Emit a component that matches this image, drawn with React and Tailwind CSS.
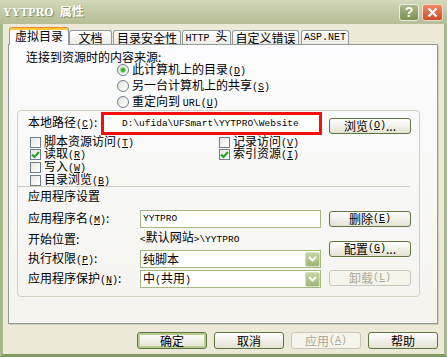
const mono = "font-['Liberation_Mono','Noto_Sans_CJK_SC',monospace]";

function K({ c }) {
  return (
    <span className={`${mono} text-[10px]`}>
      (<span className="underline">{c}</span>)
    </span>
  );
}

function Btn({ children, className = '', def = false, disabled = false }) {
  return (
    <div
      className={`flex items-center justify-center rounded-[3px] border ${
        disabled
          ? 'border-[#c9c7ba] bg-[#f5f4ea] text-[#aca899]'
          : 'border-[#5f7440] bg-gradient-to-b from-white to-[#e4e2d2] text-black'
      } ${def ? 'shadow-[inset_0_0_0_2px_#b5cc8c]' : ''} ${className}`}
    >
      {children}
    </div>
  );
}

function Check({ checked, children }) {
  return (
    <div className="h-full flex items-center gap-[3px] leading-[12px]">
      <div className="shrink-0 w-[11px] h-[11px] border border-[#6f7e8c] bg-gradient-to-br from-[#e6e6e0] to-white flex items-center justify-center">
        {checked && (
          <svg width="9" height="9" viewBox="0 0 9 9">
            <path d="M1 4.5 L3.5 7 L8 2" fill="none" stroke="#21a121" strokeWidth="2" />
          </svg>
        )}
      </div>
      <span className="leading-[12px]">{children}</span>
    </div>
  );
}

function Radio({ checked, children }) {
  return (
    <div className="h-[16px] flex items-center gap-[3px]">
      <div className="w-[12px] h-[12px] rounded-full border border-[#6f7e8c] bg-gradient-to-br from-[#e3e3dc] to-white flex items-center justify-center">
        {checked && <div className="w-[4px] h-[4px] rounded-full bg-[#3fae2e] shadow-[0_0_0_1px_#9ad58f]" />}
      </div>
      <span>{children}</span>
    </div>
  );
}

function Select({ children }) {
  return (
    <div className="w-[181px] h-[18px] border border-[#a5b97f] bg-white flex items-center justify-between pl-[2px]">
      <span>{children}</span>
      <div className="w-[15px] h-[15px] rounded-[2px] border border-[#d5e0c0] bg-gradient-to-b from-[#c4d5a4] to-[#9eb677] flex items-center justify-center">
        <svg width="9" height="6" viewBox="0 0 9 6">
          <path d="M1 1 L4.5 4.5 L8 1" fill="none" stroke="white" strokeWidth="2" />
        </svg>
      </div>
    </div>
  );
}

function Tab({ label, active, className = '' }) {
  if (active) {
    return (
      <div className={`relative z-10 -mb-px h-[18px] flex items-center justify-center pb-[1px] border border-b-0 border-[#919b9c] border-t-[#e68b2c] rounded-t-[3px] bg-[#fcfcfe] shadow-[inset_0_2px_0_#ffc73c] ${className}`}>
        {label}
      </div>
    );
  }
  return (
    <div className={`h-[14px] flex items-center justify-center leading-[12px] border border-b-0 border-[#919b9c] rounded-t-[3px] bg-gradient-to-b from-white to-[#ecebe5] ${className}`}>
      {label}
    </div>
  );
}

export default function App() {
  return (
    <div className="w-[447px] h-[357px] flex flex-col bg-[#ece9d8] font-['Noto_Sans_CJK_SC',sans-serif] text-[12px] leading-[14px] text-black overflow-hidden">
      {/* title bar */}
      <div className="h-[24px] flex items-center justify-between pl-[3px] pr-[4px] bg-gradient-to-b from-[#d3d9bb] via-[#c2c9a5] to-[#b6be97]">
        <span className="font-['Liberation_Serif','Noto_Sans_CJK_SC',serif] font-bold text-[12px] text-white [text-shadow:1px_1px_0_#8c9472]">
          YYTPRO&nbsp; 属性
        </span>
        <div className="flex items-center gap-[3px]">
          <div className="w-[20px] h-[17px] rounded-[3px] border border-[#e8eedc] bg-gradient-to-b from-[#a9ba88] to-[#7b9256] flex items-center justify-center text-white font-bold text-[14px] font-['Liberation_Sans',sans-serif]">
            ?
          </div>
          <div className="w-[21px] h-[17px] rounded-[3px] border border-[#f4d8cc] bg-gradient-to-b from-[#e88b66] to-[#cd4a22] flex items-center justify-center">
            <svg width="11" height="11" viewBox="0 0 11 11">
              <path d="M1.5 1.5 L9.5 9.5 M9.5 1.5 L1.5 9.5" stroke="white" strokeWidth="2.2" />
            </svg>
          </div>
        </div>
      </div>

      <div className="flex-1 flex flex-col border-x-[3px] border-b-[3px] border-x-[#a5b98a] border-b-[#7f9b5f] px-[5px]">
        {/* tabs */}
        <div className="h-[20px] flex items-end">
          <Tab active label="虚拟目录" className="w-[60px] ml-[1px]" />
          <Tab label="文档" className="w-[43px]" />
          <Tab label="目录安全性" className="w-[68px] ml-[1px]" />
          <Tab label={<span><span className={`${mono} text-[10px]`}>HTTP </span>头</span>} className="w-[49px] ml-[1px]" />
          <Tab label="自定义错误" className="w-[67px] ml-[1px]" />
          <Tab label={<span className={`${mono} text-[10px]`}>ASP.NET</span>} className="w-[48px] ml-[2px]" />
        </div>

        {/* panel */}
        <div className="w-[430px] h-[280px] border border-[#919b9c] bg-gradient-to-b from-[#fcfcfe] to-[#f4f3ee] shadow-[1px_1px_0_#d0cdb8]">
          <div className="h-[17px] pt-[5px] pl-[17px]">连接到资源时的内容来源:</div>
          <div className="pl-[108px] flex flex-col">
            <Radio checked>此计算机上的目录<K c="D" /></Radio>
            <Radio>另一台计算机上的共享<K c="S" /></Radio>
            <Radio>重定向到 <span className={`${mono} text-[10px]`}>URL</span><K c="U" /></Radio>
          </div>

          <div className="ml-[8px] w-[403px] h-[187px] border border-[#d0d0bf] rounded-[4px] flex flex-col">
            <div className="mt-[1px] h-[23px] flex items-center">
              <span className="w-[83px] pl-[10px]">本地路径<K c="C" />:</span>
              <div className={`w-[221px] h-[23px] border-[3px] border-[#f2100e] bg-white flex items-center pl-[18px] ${mono} text-[9.5px]`}>
                D:\ufida\UFSmart\YYTPRO\Website
              </div>
              <Btn className="ml-[7px] mt-[4px] w-[82px] h-[16px]">浏览<K c="O" />...</Btn>
            </div>

            <div className="mt-[1px] pl-[12px] grid grid-cols-[189px_1fr] grid-rows-[12px_13px_13px_12px]">
              <Check>脚本资源访问<K c="T" /></Check>
              <Check>记录访问<K c="V" /></Check>
              <Check checked>读取<K c="R" /></Check>
              <Check checked>索引资源<K c="I" /></Check>
              <Check>写入<K c="W" /></Check>
              <div />
              <Check>目录浏览<K c="B" /></Check>
              <div />
            </div>

            <div className="h-[1px] w-[392px] bg-[#d0d0bf]" />
            <div className="mt-[2px] h-[14px] pl-[10px]">应用程序设置</div>

            <div className="mt-[7px] flex">
              <div className="w-[303px] pl-[10px] flex flex-col">
                <div className="h-[18px] flex items-center">
                  <span className="w-[112px]">应用程序名<K c="M" />:</span>
                  <div className={`w-[181px] h-[18px] border border-[#a5b97f] bg-white flex items-center pl-[2px] ${mono} text-[9.5px]`}>
                    YYTPRO
                  </div>
                </div>
                <div className="h-[21px] flex items-center">
                  <span className="w-[112px]">开始位置:</span>
                  <span>
                    <span className={`${mono} text-[9.5px]`}>&lt;</span>默认网站<span className={`${mono} text-[9.5px]`}>&gt;\YYTPRO</span>
                  </span>
                </div>
                <div className="mt-[1px] h-[18px] flex items-center">
                  <span className="w-[112px]">执行权限<K c="P" />:</span>
                  <Select>纯脚本</Select>
                </div>
                <div className="mt-[2px] h-[18px] flex items-center">
                  <span className="w-[112px]">应用程序保护<K c="N" />:</span>
                  <Select>中<span className={`${mono} text-[10px]`}>(</span>共用<span className={`${mono} text-[10px]`}>)</span></Select>
                </div>
              </div>
              <div className="ml-[8px] w-[82px] flex flex-col">
                <Btn className="mt-[1px] h-[16px]">删除<K c="E" /></Btn>
                <Btn className="mt-[14px] h-[16px]">配置<K c="G" />...</Btn>
                <Btn disabled className="mt-[13px] h-[16px]">卸载<K c="L" /></Btn>
              </div>
            </div>
          </div>
        </div>

        {/* bottom buttons */}
        <div className="w-[430px] mt-[8px] flex justify-end gap-[7px]">
          <Btn def className="w-[70px] h-[17px]">确定</Btn>
          <Btn className="w-[70px] h-[17px]">取消</Btn>
          <Btn disabled className="w-[70px] h-[17px]">应用<K c="A" /></Btn>
          <Btn className="w-[70px] h-[17px]">帮助</Btn>
        </div>
      </div>
    </div>
  );
}
